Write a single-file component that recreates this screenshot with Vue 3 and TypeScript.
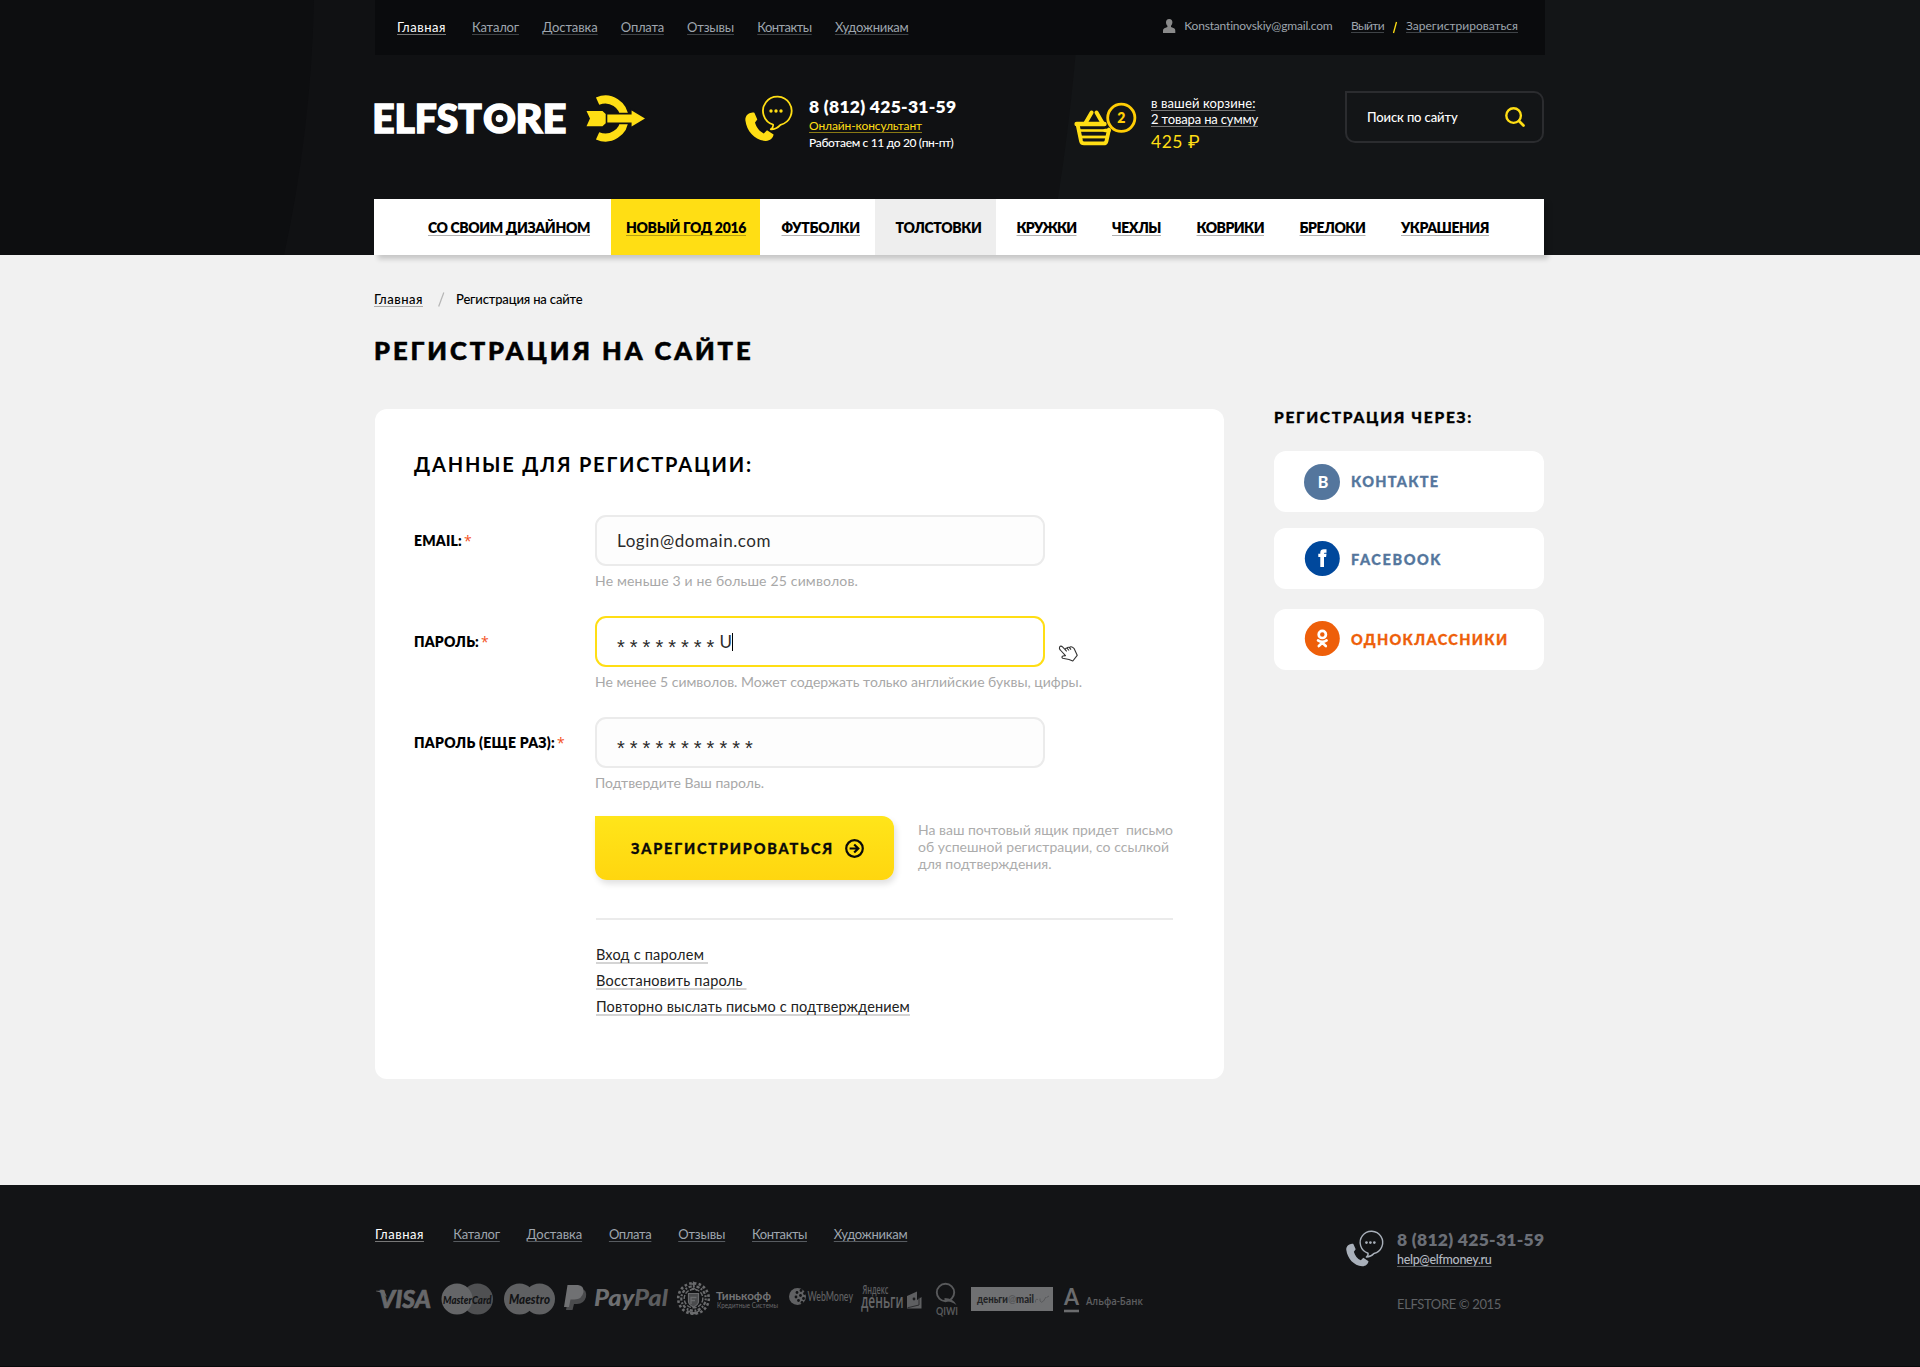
<script setup lang="ts">
import type { Directive } from 'vue'

interface Link {
  label: string
  width: number
}

interface Category extends Link {
  state?: 'active' | 'hover'
}

interface Field {
  label: string
  labelWidth: number
  value: string
  valueWidth: number
  masked: boolean
  typed?: string
  hint: string
  hintWidth: number
}

// Tracks a text so that it fills the given measure in pixels.
const vMeasure: Directive<HTMLElement, number> = {
  mounted(el, { value }) {
    const count = (el.textContent ?? '').length
    if (!count) return
    const natural = el.getBoundingClientRect().width
    const base = parseFloat(getComputedStyle(el).letterSpacing) || 0
    el.style.letterSpacing = `${(base + (value - natural) / count).toFixed(4)}px`
  },
}

const topLinks: Link[] = [
  { label: 'Главная', width: 49 },
  { label: 'Каталог', width: 47 },
  { label: 'Доставка', width: 55.5 },
  { label: 'Оплата', width: 43 },
  { label: 'Отзывы', width: 47 },
  { label: 'Контакты', width: 54.5 },
  { label: 'Художникам', width: 73.5 },
]

const footerLinks: Link[] = [
  { label: 'Главная', width: 49 },
  { label: 'Каталог', width: 46.5 },
  { label: 'Доставка', width: 55.5 },
  { label: 'Оплата', width: 42.5 },
  { label: 'Отзывы', width: 47 },
  { label: 'Контакты', width: 55 },
  { label: 'Художникам', width: 73.5 },
]

const categories: Category[] = [
  { label: 'СО СВОИМ ДИЗАЙНОМ', width: 162 },
  { label: 'НОВЫЙ ГОД 2016', width: 120, state: 'active' },
  { label: 'ФУТБОЛКИ', width: 78.5 },
  { label: 'ТОЛСТОВКИ', width: 86, state: 'hover' },
  { label: 'КРУЖКИ', width: 60 },
  { label: 'ЧЕХЛЫ', width: 49 },
  { label: 'КОВРИКИ', width: 67.5 },
  { label: 'БРЕЛОКИ', width: 66 },
  { label: 'УКРАШЕНИЯ', width: 88 },
]

const fields: Field[] = [
  {
    label: 'EMAIL:',
    labelWidth: 48,
    value: 'Login@domain.com',
    valueWidth: 154,
    masked: false,
    hint: 'Не меньше 3 и не больше 25 символов.',
    hintWidth: 263,
  },
  {
    label: 'ПАРОЛЬ:',
    labelWidth: 65,
    value: '********',
    valueWidth: 102.4,
    masked: true,
    typed: 'U',
    hint: 'Не менее 5 символов. Может содержать только английские буквы, цифры.',
    hintWidth: 487,
  },
  {
    label: 'ПАРОЛЬ (ЕЩЕ РАЗ):',
    labelWidth: 141,
    value: '***********',
    valueWidth: 140.8,
    masked: true,
    hint: 'Подтвердите Ваш пароль.',
    hintWidth: 169,
  },
]

const help: Link[] = [
  { label: 'Вход с паролем ', width: 112 },
  { label: 'Восстановить пароль ', width: 150.5 },
  { label: 'Повторно выслать письмо с подтверждением', width: 314 },
]

const note: Link[] = [
  { label: 'На ваш почтовый ящик придет  письмо', width: 255 },
  { label: 'об успешной регистрации, со ссылкой', width: 251 },
  { label: 'для подтверждения.', width: 133.5 },
]
</script>

<template>
  <div class="page">
    <header class="header">
      <svg class="rays" width="1920" height="255" viewBox="0 0 1920 255" aria-hidden="true">
        <path d="M0 0H314Q311 130 284 255H0Z" fill="#0d0e10" />
        <path d="M1080 0H1920V255H1048Q1070 140 1080 0Z" fill="#131517" />
      </svg>
      <div class="wrap">
        <div class="topbar">
          <nav class="toplinks">
            <a v-for="(l, i) in topLinks" :key="l.label" v-measure="l.width" :class="{ current: i === 0 }">{{ l.label }}</a>
          </nav>
          <div class="account">
            <svg width="13" height="15" viewBox="0 0 13 15">
              <path d="M6.2 0C8.4 0 9.6 1.6 9.4 3.6C9.3 5.2 8.6 6.2 8 6.8V8L11 9.2C12 9.7 12.3 10.4 12.3 12V14H0V12C0 10.4.4 9.7 1.4 9.2L4.4 8V6.8C3.8 6.2 3 5.2 3 3.6C2.9 1.6 4 0 6.2 0Z" fill="#8a8a8a" />
            </svg>
            <span v-measure="148.5" class="mail">Konstantinovskiy@gmail.com</span>
            <a v-measure="33">Выйти</a>
            <svg class="slash" width="22" height="13" viewBox="0 0 22 13"><path d="M9.500 12L12.500 1" stroke="#ffde14" stroke-width="1.300" /></svg>
            <a v-measure="112">Зарегистрироваться</a>
          </div>
        </div>

        <div class="brand">
          <svg class="logo" width="276" height="60" viewBox="-4 -6 276 60">
            <g class="wordmark" fill="#fff" stroke="#fff">
              <text x="-1.800" y="37.500" textLength="109.500" lengthAdjust="spacingAndGlyphs">ELFST</text>
              <text x="109" y="37.500" textLength="33" lengthAdjust="spacingAndGlyphs">O</text>
              <text x="141.500" y="37.500" textLength="51" lengthAdjust="spacingAndGlyphs">RE</text>
            </g>
            <circle cx="125.500" cy="23.500" r="3.800" fill="#fff" />
            <path d="M223.600 6.200A19 19 0 1 1 223.600 40.800" fill="none" stroke="#ffde14" stroke-width="8" />
            <path d="M231 17.800H256V12.500L275 23.500L256 34.500V29.300H231Z" fill="#101113" />
            <path d="M212.500 16H228.500L231.700 19V28.200L228.500 31.200H212.500L216 23.500Z" fill="#ffde14" />
            <path d="M233.300 19.500H257.600V15.500L271 23.500L257.600 31.500V27.500H233.300Z" fill="#ffde14" />
          </svg>

          <div class="phone">
            <svg width="47" height="47" viewBox="0 0 47 47">
              <path d="M25.800 34.300C30 34.400 33 32.500 35.500 29.800A14.300 14.300 0 1 0 28 29.500C28.400 31.800 27.500 33.300 25.800 34.300Z" fill="none" stroke="#ffde14" stroke-width="1.800" stroke-linejoin="round" />
              <g fill="#ffde14">
                <circle cx="26" cy="16" r="1.700" />
                <circle cx="31" cy="16" r="1.700" />
                <circle cx="36" cy="16" r="1.700" />
                <path d="M6.500 17.800C2.500 18.500 0 21.500.4 25.500C1.800 36.500 10 45.400 20.500 46C25 46.200 28 43 28.600 39.600L22 35.300L18.800 38.400C14.500 36.500 11.300 32.300 10 27.500L12.300 24.500L9.500 18C9 17.300 7.800 17.500 6.500 17.800Z" />
              </g>
            </svg>
            <div class="phone-text">
              <span v-measure="147.500" class="number">8 (812) 425-31-59</span>
              <a v-measure="113">Онлайн-консультант</a>
              <span v-measure="144.500" class="hours">Работаем с 11 до 20 (пн-пт)</span>
            </div>
          </div>

          <div class="cart">
            <svg width="63" height="44" viewBox="0 0 63 44">
              <g fill="none" stroke="#ffde14">
                <path d="M10.500 20L16.600 9.500M21.500 9.500L27.500 20" stroke-width="4" stroke-linecap="round" />
                <path d="M1.600 21H29.500" stroke-width="4.400" stroke-linecap="round" />
                <path d="M2.500 21L6 38Q6.600 40.400 9 40.400H28.500Q31 40.400 31.500 38L34 26.500" stroke-width="3.800" stroke-linejoin="round" stroke-linecap="round" />
                <path d="M4 27.500H32" stroke-width="2.600" />
                <path d="M5 34H31" stroke-width="2.800" />
                <path d="M30 27.500H34" stroke-width="3.600" stroke-linecap="round" />
              </g>
              <circle cx="46.300" cy="14.800" r="13.600" fill="#131517" stroke="#ffcd05" stroke-width="2.800" />
              <text x="46.300" y="19.600" text-anchor="middle" class="badge">2</text>
            </svg>
            <div class="cart-text">
              <a v-measure="104.500">в вашей корзине:</a>
              <a v-measure="107">2 товара на сумму</a>
              <strong v-measure="49">425 ₽</strong>
            </div>
          </div>

          <div class="search">
            <span v-measure="90.500">Поиск по сайту</span>
            <svg width="20" height="20" viewBox="0 0 20 20" fill="none" stroke="#ffde14">
              <circle cx="8.600" cy="8.600" r="7.300" stroke-width="2.400" />
              <path d="M14 14L18.500 18.500" stroke-width="2.800" stroke-linecap="round" />
            </svg>
          </div>
        </div>

        <nav class="categories">
          <a v-for="c in categories" :key="c.label" :class="c.state"><span v-measure="c.width">{{ c.label }}</span></a>
        </nav>
      </div>
    </header>

    <main class="wrap main">
      <div class="crumbs">
        <a v-measure="49">Главная</a>
        <svg width="7" height="15" viewBox="0 0 7 15"><path d="M.7 14.500L5.800.5" stroke="#b5b5b5" stroke-width="1.200" /></svg>
        <span v-measure="126.500">Регистрация на сайте</span>
      </div>
      <h1><span v-measure="379.500">РЕГИСТРАЦИЯ НА САЙТЕ</span></h1>

      <div class="columns">
        <section class="card">
          <h2><span v-measure="339">ДАННЫЕ ДЛЯ РЕГИСТРАЦИИ:</span></h2>

          <div v-for="f in fields" :key="f.label" class="row">
            <div class="label"><span v-measure="f.labelWidth">{{ f.label }}</span><i>*</i></div>
            <div class="control">
              <div class="input" :class="{ focused: f.typed }">
                <span v-measure="f.valueWidth" :class="{ stars: f.masked }">{{ f.value }}</span>
                <template v-if="f.typed"><span class="typed">{{ f.typed }}</span><span class="caret"></span></template>
                <svg v-if="f.typed" class="hand" width="21" height="18" viewBox="0 0 21 18" fill="#fff" stroke="#333" stroke-width="1.100" stroke-linejoin="round">
                  <path d="M1.500 2.300C1.900.9 3.400.8 4.500 1.900L7.200 4.600C7.300 3.400 7.900 2.900 9 3.200C9.500 2.300 10.400 2 11.500 2.600C12.200 1.600 13.500 1.500 14.700 2.400L16.200 3.700L19.200 10.300L14.800 16L11 14.500L4.700 13.200C3.500 12.600 3.800 11.400 5 11L7.500 10.600L2.300 5C1.400 4.100 1.200 3.200 1.500 2.300Z" />
                  <path d="M7.200 4.600L8.700 6.400M9 3.200L11 5.500M11.500 2.600L13 4.600" fill="none" />
                </svg>
              </div>
              <div class="hint"><span v-measure="f.hintWidth">{{ f.hint }}</span></div>
            </div>
          </div>

          <div class="actions">
            <button type="button">
              <span v-measure="203">ЗАРЕГИСТРИРОВАТЬСЯ</span>
              <svg width="19" height="19" viewBox="0 0 19 19" fill="none" stroke="#0a0a0a">
                <circle cx="9.500" cy="9.500" r="8.300" stroke-width="2.200" />
                <path d="M4.600 9.500H12.500M9.200 5.500L13.300 9.500L9.200 13.500" stroke-width="2.200" />
              </svg>
            </button>
            <p>
              <template v-for="n in note" :key="n.label"><span v-measure="n.width">{{ n.label }}</span><br /></template>
            </p>
          </div>

          <div class="help">
            <a v-for="h in help" :key="h.label" v-measure="h.width">{{ h.label }}</a>
          </div>
        </section>

        <aside class="social">
          <h3><span v-measure="199">РЕГИСТРАЦИЯ ЧЕРЕЗ:</span></h3>
          <a class="vk">
            <svg width="36" height="36" viewBox="0 0 36 36">
              <circle cx="18" cy="18" r="18" fill="#54769d" />
              <text x="19" y="24" text-anchor="middle" class="glyph">B</text>
            </svg>
            <span v-measure="88.500">КОНТАКТЕ</span>
          </a>
          <a class="fb">
            <svg width="36" height="36" viewBox="0 0 36 36">
              <circle cx="18.300" cy="17.500" r="17.500" fill="#00489c" />
              <path d="M16.300 26V16.100H14.300V12.800H16.300V11.500C16.300 9.100 17.700 8.300 19.800 8.300H22.500V11.700H21C20.300 11.700 20 12 20 12.700V12.800H22.500L22.100 16.100H20V26Z" fill="#fff" />
            </svg>
            <span v-measure="91">FACEBOOK</span>
          </a>
          <a class="ok">
            <svg width="36" height="36" viewBox="0 0 36 36">
              <circle cx="18.300" cy="17.500" r="17.500" fill="#ee5f0a" />
              <g fill="none" stroke="#fff" stroke-linecap="round">
                <circle cx="18.300" cy="13.400" r="3.600" stroke-width="2.700" />
                <path d="M14 19.400Q18.300 22.300 22.600 19.400M14.800 25L18.300 21.800L21.800 25" stroke-width="2.600" />
              </g>
            </svg>
            <span v-measure="157.500">ОДНОКЛАССНИКИ</span>
          </a>
        </aside>
      </div>
    </main>

    <footer class="footer">
      <div class="wrap footer-in">
        <div>
          <nav class="footlinks">
            <a v-for="(l, i) in footerLinks" :key="l.label" v-measure="l.width" :class="{ current: i === 0 }">{{ l.label }}</a>
          </nav>
          <div class="payments">
            <svg width="66" height="38" viewBox="0 0 66 38">
              <g fill="#67686a" stroke="#67686a">
                <text x="4" y="28" textLength="52" lengthAdjust="spacingAndGlyphs" class="visa">VISA</text>
                <path d="M1 10.800H9L12 17Q7 12 1 11.200Z" stroke="none" />
              </g>
            </svg>
            <svg width="63" height="38" viewBox="0 0 63 38">
              <circle cx="36.500" cy="19" r="15.500" fill="#4f5052" />
              <circle cx="16" cy="19" r="15.500" fill="#656668" />
              <text x="2" y="23.500" textLength="48.500" lengthAdjust="spacingAndGlyphs" class="card-name">MasterCard</text>
            </svg>
            <svg width="60" height="38" viewBox="0 0 60 38">
              <circle cx="15.500" cy="19" r="15.500" fill="#5f6062" />
              <circle cx="35.500" cy="19" r="15.500" fill="#5f6062" />
              <text x="5" y="23.500" textLength="41" lengthAdjust="spacingAndGlyphs" class="card-name big">Maestro</text>
            </svg>
            <svg width="111" height="38" viewBox="0 0 111 38">
              <path d="M6 9H18Q23 10 22 17Q20 24 13 24H10L8.500 30H2Z" fill="#4a4b4d" />
              <path d="M3.500 5H14Q20 5.500 19.500 12Q18 19.500 10.500 19.500H6.500L5 27H0Z" fill="#707173" />
              <text x="30" y="26" class="paypal" fill="#6e6f71" textLength="74" lengthAdjust="spacingAndGlyphs">Pay<tspan fill="#5c5d5f">Pal</tspan></text>
            </svg>
            <svg width="114" height="38" viewBox="0 0 114 38">
              <g fill="none" stroke="#6a6b6d">
                <circle cx="18.500" cy="18.500" r="15.300" stroke-width="2.600" stroke-dasharray="2.600 2.200" />
                <circle cx="18.500" cy="18.500" r="12.200" stroke-width="2.200" stroke-dasharray="1.800 1.700 3.200 1.400" />
                <circle cx="18.500" cy="18.500" r="9.300" stroke-width="1.400" stroke-dasharray="4.200 1.500" />
                <path d="M13.500 13.500H23.500V22Q23 25 18.500 27Q14 25 13.500 22Z" fill="#4a4b4d" stroke-width="1.200" />
                <path d="M16 24V17.500H21.500M16 20.500H20M18.500 1.500V7M16.200 4H20.800M15 10.500L18.500 8L22 10.500" stroke-width="1.300" />
                <path d="M12 30.500Q18.500 35 25 30.500M15 33.500H22" stroke-width="1.500" />
              </g>
              <text x="41" y="20" class="tink" textLength="55" lengthAdjust="spacingAndGlyphs">Тинькофф</text>
              <text x="42" y="27.500" class="tink-sub" textLength="61" lengthAdjust="spacingAndGlyphs">Кредитные Системы</text>
            </svg>
            <svg width="72" height="38" viewBox="0 0 72 38">
              <circle cx="8.500" cy="16.500" r="8.500" fill="#606163" />
              <g fill="#131416">
                <circle cx="8" cy="12.500" r="1.400" /><circle cx="12" cy="10.500" r="1.400" /><circle cx="15.500" cy="13.500" r="1.400" />
                <circle cx="7" cy="17" r="1.400" /><circle cx="11.500" cy="15.500" r="1.400" /><circle cx="14.500" cy="18.500" r="1.400" />
                <circle cx="9.500" cy="20.500" r="1.400" /><circle cx="13" cy="22.500" r="1.400" />
              </g>
              <text x="18.500" y="21" class="webmoney" textLength="45.500" lengthAdjust="spacingAndGlyphs">WebMoney</text>
            </svg>
            <svg width="75" height="38" viewBox="0 0 75 38">
              <text x="1.500" y="14" class="yandex" textLength="26" lengthAdjust="spacingAndGlyphs">Яндекс</text>
              <text x="0" y="27.500" class="money" textLength="42.500" lengthAdjust="spacingAndGlyphs">деньги</text>
              <path d="M46 16L56 11.500V20L60.500 17V28.500H46Z" fill="#5e5f61" />
              <path d="M46.500 27.800L58 25V17.500" fill="none" stroke="#2c2d2f" />
              <circle cx="53" cy="19" r="1.400" fill="#1b1c1e" />
            </svg>
            <svg width="35" height="38" viewBox="0 0 35 38">
              <circle cx="9.500" cy="12.500" r="8.700" fill="none" stroke="#58595b" stroke-width="1.900" />
              <path d="M8.500 18Q17 18 20.500 25Q15 21 8.500 21Z" fill="#58595b" />
              <text x="0" y="35" class="qiwi" textLength="22" lengthAdjust="spacingAndGlyphs">QIWI</text>
            </svg>
            <svg width="93" height="38" viewBox="0 0 93 38">
              <rect y="7" width="82" height="24" fill="#6f7072" />
              <text x="6" y="22.500" class="mailru" textLength="57" lengthAdjust="spacingAndGlyphs">деньги<tspan fill="#58595b">@</tspan>mail</text>
              <path d="M64.500 22.500Q64 18.500 67 19.500M69 18.500V21Q70.500 23.500 72.500 21L75 17M75.500 17.500L78 16" fill="none" stroke="#58595b" />
            </svg>
            <svg width="84" height="38" viewBox="0 0 84 38">
              <text x="0" y="25" class="alfa" textLength="15" lengthAdjust="spacingAndGlyphs">А</text>
              <path d="M0 31H15" stroke="#6b6c6e" stroke-width="2.600" />
              <text x="22" y="24.500" class="alfa-name" textLength="57" lengthAdjust="spacingAndGlyphs">Альфа-Банк</text>
            </svg>
          </div>
        </div>
        <div class="contacts">
          <svg width="37" height="37" viewBox="0 0 47 47">
            <path d="M25.800 34.300C30 34.400 33 32.500 35.500 29.800A14.300 14.300 0 1 0 28 29.500C28.400 31.800 27.500 33.300 25.800 34.300Z" fill="none" stroke="#a9b0ba" stroke-width="1.800" stroke-linejoin="round" />
            <g fill="#a9b0ba">
              <circle cx="26" cy="16" r="1.700" />
              <circle cx="31" cy="16" r="1.700" />
              <circle cx="36" cy="16" r="1.700" />
              <path d="M6.500 17.800C2.500 18.500 0 21.500.4 25.500C1.800 36.500 10 45.400 20.500 46C25 46.200 28 43 28.600 39.600L22 35.300L18.800 38.400C14.500 36.500 11.300 32.300 10 27.500L12.300 24.500L9.500 18C9 17.300 7.800 17.500 6.500 17.800Z" />
            </g>
          </svg>
          <div class="contact-text">
            <span v-measure="147.500" class="number">8 (812) 425-31-59</span>
            <a v-measure="94.500">help@elfmoney.ru</a>
            <span v-measure="104" class="copy">ELFSTORE © 2015</span>
          </div>
        </div>
      </div>
    </footer>
  </div>
</template>

<style>
body {
  background: #f1f1f1;
}
</style>

<style scoped>
.page {
  font-family: Lato, Roboto, sans-serif;
  color: #000;
  height: 1367px;
  overflow: hidden;
  display: flex;
  flex-direction: column;
}
.page * {
  box-sizing: border-box;
}
.page span,
.page a,
.page strong {
  white-space: pre;
}
.wrap {
  width: 1172px;
  margin: 0 auto;
}
h1,
h2,
h3,
p {
  margin: 0;
}
svg {
  display: block;
  flex: none;
  overflow: visible;
}
a {
  text-decoration: underline 1px;
  text-underline-offset: 2px;
  text-decoration-skip-ink: none;
}

/* header */
.header {
  position: relative;
  height: 255px;
  flex: none;
  background: #101113;
}
.rays {
  position: absolute;
  left: 0;
  top: 0;
}
.header .wrap {
  position: relative;
}
.topbar {
  width: 1170px;
  height: 55px;
  margin-left: 1px;
  padding: 0 27px 0 22px;
  background: #0a0b0d;
  display: flex;
  justify-content: space-between;
  align-items: flex-start;
}
.toplinks,
.footlinks {
  display: flex;
  gap: 23.2px;
  font-size: 13px;
  line-height: 16px;
  color: #9fa6ae;
}
.toplinks {
  padding-top: 19px;
}
.toplinks a,
.footlinks a {
  text-decoration-color: #3f4347;
}
.toplinks .current,
.footlinks .current {
  color: #fff;
  text-decoration-color: #777;
  margin-right: 2.8px;
}
.account {
  display: flex;
  align-items: flex-start;
  padding-top: 18px;
  font-size: 12px;
  line-height: 16px;
  color: #9fa6ae;
}
.account svg {
  margin-top: 1px;
}
.account .mail {
  margin: 0 18.5px 0 8px;
}
.account a {
  text-decoration-color: #3f4347;
}
.account .slash {
  margin-top: 3px;
}

.brand {
  height: 144px;
  display: flex;
  align-items: flex-start;
}
.logo {
  margin: 34px 0 0 -4px;
}
.wordmark {
  font: 900 39.5px Lato, sans-serif;
  stroke-width: 1.5px;
}
.phone {
  display: flex;
  margin: 40px 0 0 99px;
}
.phone-text {
  display: flex;
  flex-direction: column;
  align-items: flex-start;
  margin-left: 17px;
  width: 160px;
  font-size: 12px;
  line-height: 16px;
  color: #fff;
}
.number {
  font-size: 17.5px;
  line-height: 22px;
  font-weight: 800;
}
.phone-text .number {
  margin-top: 0.5px;
}
.phone-text a {
  color: #ffde14;
  text-decoration-color: #8a7a14;
}
.hours {
  margin-top: 1.5px;
  font-weight: 500;
}
.cart {
  display: flex;
  margin: 48px 0 0 106px;
}
.badge {
  font: 800 14px Lato, sans-serif;
  fill: #ffcd05;
}
.cart-text {
  display: flex;
  flex-direction: column;
  align-items: flex-start;
  margin: -8.5px 0 0 13px;
  width: 120px;
  font-size: 13px;
  line-height: 16px;
  color: #fff;
}
.cart-text a {
  text-decoration-color: #777;
}
.cart-text strong {
  margin-top: 4px;
  font-size: 17.5px;
  line-height: 22px;
  font-weight: 400;
  color: #ffde14;
}
.search {
  display: flex;
  align-items: center;
  justify-content: space-between;
  width: 199px;
  height: 52px;
  margin: 36px 0 0 74px;
  padding: 0 17px 1px 20px;
  border: 2px solid #2b2c2f;
  border-radius: 0 10px 10px 10px;
  font-size: 13px;
  line-height: 16px;
  font-weight: 500;
  color: #fff;
}

.categories {
  width: 1170px;
  height: 56px;
  display: flex;
  background: #fff;
  box-shadow: 4px 4px 5px rgba(0, 0, 0, 0.18);
  clip-path: inset(0 -12px -14px 0);
  font-size: 14px;
  line-height: 54px;
  font-weight: 800;
}
.categories a {
  padding: 2px 0 0 35.5px;
  text-decoration-color: #b0b0b0;
}
.categories a:first-child {
  padding-left: 54px;
}
.categories .active {
  margin-left: 21px;
  padding: 2px 14px 0 15px;
  background: #ffde14;
  text-decoration-color: #b79f12;
}
.categories .active + a {
  padding-left: 21.5px;
}
.categories .hover {
  margin-left: 15px;
  padding: 2px 14px 0 20.5px;
  background: #eee;
  text-decoration: none;
}
.categories .hover + a {
  padding-left: 21px;
}

/* content */
.main {
  flex: 1;
}
.crumbs {
  display: flex;
  align-items: flex-start;
  padding-top: 35.5px;
  height: 51px;
  font-size: 13px;
  line-height: 16px;
  font-weight: 500;
}
.crumbs a {
  text-decoration-color: #aaa;
}
.crumbs svg {
  margin: 1px 11px 0 15px;
}
h1 {
  margin-top: 28px;
  font-size: 25.5px;
  line-height: 32px;
  font-weight: 900;
  -webkit-text-stroke: 0.6px #000;
}
.columns {
  display: flex;
  margin-top: 41px;
}
.card {
  width: 849px;
  height: 670px;
  margin: 2px 0 0 1px;
  padding: 43px 0 0 39px;
  background: #fff;
  border-radius: 12px;
}
h2 {
  font-size: 20px;
  line-height: 24px;
  font-weight: 700;
  margin-bottom: 39px;
}
.row {
  display: flex;
  height: 75px;
  margin-bottom: 26px;
}
.label {
  width: 181px;
  font-size: 14px;
  line-height: 52px;
  font-weight: 800;
}
.label i {
  margin-left: 2px;
  font: 400 14px "Open Sans", sans-serif;
  line-height: 20px;
  color: #f4511e;
}
.input {
  position: relative;
  width: 450px;
  height: 51px;
  padding-left: 20px;
  border: 2px solid #ebebeb;
  border-radius: 11px;
  background: #fdfdfd;
  font-size: 17px;
  line-height: 48px;
  color: #2b2b2b;
  display: flex;
}
.input.focused {
  border-color: #ffde14;
  background: #fff;
}
.stars {
  position: relative;
  top: 5px;
  font: 400 20px "Liberation Sans", sans-serif;
  line-height: 48px;
}
.caret {
  width: 1px;
  height: 18px;
  margin-top: 15px;
  background: #000;
}
.hand {
  position: absolute;
  left: 461px;
  top: 27px;
}
.hint {
  margin-top: 6px;
  font-size: 14px;
  line-height: 18px;
  color: #a8a8a8;
}
.actions {
  display: flex;
  margin: -2px 0 0 181px;
}
button {
  width: 299px;
  height: 64px;
  padding: 1px 0 0 36px;
  border: 0;
  border-radius: 0 12px 12px 12px;
  background: linear-gradient(#ffe51a, #ffd60f);
  box-shadow: 2px 4px 6px rgba(0, 0, 0, 0.12);
  display: flex;
  align-items: center;
  gap: 11px;
  font: 900 14.5px/20px Lato, sans-serif;
  color: #0a0a0a;
}
button span {
  margin-top: 1px;
  -webkit-text-stroke: 0.3px #0a0a0a;
}
.actions p {
  margin: 5px 0 0 24px;
  font-size: 14px;
  line-height: 17px;
  color: #acacac;
}
.help {
  width: 577px;
  margin: 38px 0 0 182px;
  padding-top: 22px;
  border-top: 2px solid #ebebeb;
  display: flex;
  flex-direction: column;
  align-items: flex-start;
  font-size: 14.5px;
  line-height: 26px;
  color: #222;
}
.help a {
  text-decoration: underline 2px #d4d4d4;
  text-underline-offset: 2px;
}

.social {
  width: 270px;
  margin-left: 50px;
}
h3 {
  font-size: 15.5px;
  line-height: 20px;
  font-weight: 900;
  margin-bottom: 24px;
  -webkit-text-stroke: 0.3px #000;
}
.social a {
  display: flex;
  align-items: flex-start;
  height: 61px;
  padding: 13px 0 0 30px;
  background: #fff;
  border-radius: 12px;
  text-decoration: none;
  font-size: 14.5px;
  line-height: 20px;
  font-weight: 900;
  color: #54769d;
}
.social a span {
  margin: 8px 0 0 11px;
  -webkit-text-stroke: 0.3px currentColor;
}
.glyph {
  font: 900 16px Lato, sans-serif;
  fill: #fff;
}
.social .fb {
  margin-top: 16px;
}
.social .fb span,
.social .ok span {
  margin-top: 9px;
}
.social .ok {
  margin-top: 20px;
  padding-top: 12px;
  color: #ee5f0a;
}

/* footer */
.footer {
  flex: none;
  height: 182px;
  background: #131416;
  border-bottom: 1px solid #08090a;
}
.footer-in {
  display: flex;
  justify-content: space-between;
}
.footlinks {
  gap: 26.8px;
  padding: 40.5px 0 0 1px;
}
.footlinks .current {
  margin-right: 2.5px;
}
.footlinks a {
  text-decoration-color: #575b60;
}
.payments {
  display: flex;
  padding-left: 1px;
  margin-top: 38.5px;
}
.visa {
  font: italic 900 24.5px Lato, sans-serif;
  stroke-width: 0.7px;
}
.card-name {
  font: italic 900 11.5px Lato, sans-serif;
  fill: #131416;
}
.card-name.big {
  font-size: 12.5px;
}
.paypal {
  font: italic 900 23px Lato, sans-serif;
}
.tink {
  font: 700 12px Lato, sans-serif;
  fill: #737476;
}
.tink-sub {
  font: 400 7px Lato, sans-serif;
  fill: #6a6b6d;
}
.webmoney {
  font: 500 12.5px Lato, sans-serif;
  fill: #606163;
}
.yandex {
  font: 600 12.5px "Open Sans", sans-serif;
  fill: #5e5f61;
}
.money {
  font: 600 20px "Open Sans", sans-serif;
  fill: #656668;
}
.qiwi {
  font: 700 11px Lato, sans-serif;
  fill: #58595b;
}
.mailru {
  font: 900 11.5px Lato, sans-serif;
  fill: #232426;
}
.alfa {
  font: 700 22px Lato, sans-serif;
  fill: #6b6c6e;
}
.alfa-name {
  font: 600 10.5px "Open Sans", sans-serif;
  fill: #5e5f61;
}
.contacts {
  display: flex;
  padding-top: 43.5px;
  width: 200px;
}
.contacts svg {
  margin-top: 1px;
}
.contact-text {
  display: flex;
  flex-direction: column;
  align-items: flex-start;
  margin-left: 14px;
}
.contact-text .number {
  color: #6b6f77;
}
.contact-text a {
  margin-top: 1.5px;
  font-size: 12.5px;
  line-height: 16px;
  font-weight: 500;
  color: #b4bac2;
  text-decoration-color: #5b5f64;
}
.contact-text .copy {
  margin-top: 27.5px;
  font-size: 13px;
  line-height: 16px;
  color: #606265;
}
</style>
